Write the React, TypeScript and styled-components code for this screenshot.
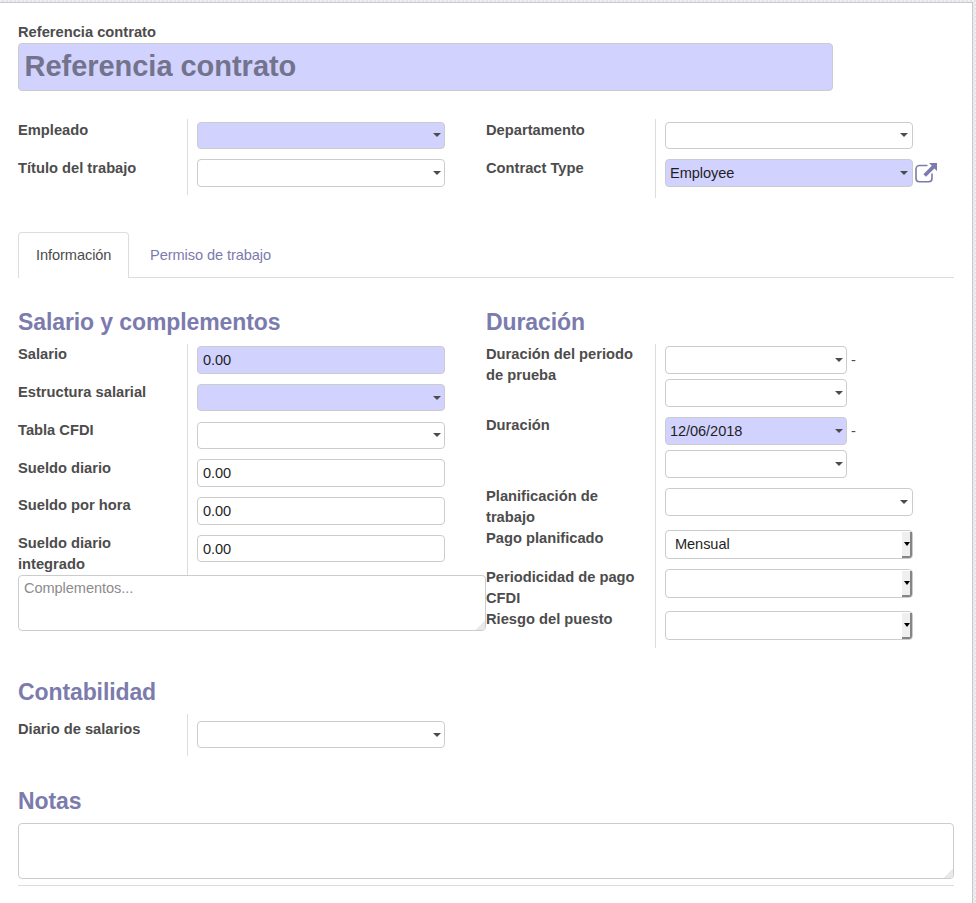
import React from "react";
import styled, { createGlobalStyle, css } from "styled-components";

const GlobalStyle = createGlobalStyle`
  * { box-sizing: border-box; }
  html, body { margin: 0; padding: 0; }
  body {
    height: 903px;
    overflow: hidden;
    font-family: "Liberation Sans", Arial, Helvetica, sans-serif;
    font-size: 14.6px;
    line-height: 21px;
    letter-spacing: -0.08px;
    color: #4c4c4c;
    background: #eeeeee repeating-conic-gradient(#e4e4e6 0 25%, #f0f0f0 0 50%) 0 0 / 4px 4px;
  }
`;

const Sheet = styled.main`
  width: 973px;
  height: 901px;
  margin-top: 2px;
  padding: 18px 18px 0;
  background: #fff;
  border: 1px solid #c8c8d3;
  border-left: 0;
  border-bottom: 0;
`;

const NameBlock = styled.header`
  height: 98px;
`;

const Label = styled.label<{ $top?: number }>`
  display: block;
  font-size: 14.7px;
  font-weight: bold;
  letter-spacing: 0;
  padding-top: ${(p) => p.$top ?? 1}px;
`;

const boxed = css`
  border: 1px solid #cccccc;
  border-radius: 4px;
`;

const NameInput = styled.div`
  ${boxed}
  width: 815px;
  height: 48px;
  padding: 0 5.5px;
  background: #d2d2ff;
  color: #73738c;
  font-size: 29px;
  font-weight: bold;
  letter-spacing: -0.03px;
  line-height: 44px;
`;

const Columns = styled.section`
  display: grid;
  grid-template-columns: 468px 468px;
  align-items: start;
`;

const Group = styled.div``;

const Row = styled.div<{ $height: number }>`
  display: grid;
  grid-template-columns: 170px 1fr;
  height: ${(p) => p.$height}px;
`;

const LabelCell = styled.div`
  border-right: 1px solid #dddddd;
  padding-right: 14px;
`;

/* Below a heading the labels sit one pixel higher against their fields. */
const Section = styled.div`
  ${Label} {
    margin-top: -1px;
  }
`;

const FieldCell = styled.div<{ $top: number }>`
  display: flex;
  flex-direction: column;
  gap: 5px;
  padding: ${(p) => p.$top}px 0 0 9px;
`;

const Line = styled.div`
  display: flex;
`;

const Input = styled.div<{ $height?: number; $required?: boolean; $narrow?: boolean; $pad?: number }>`
  ${boxed}
  display: flex;
  justify-content: space-between;
  width: ${(p) => (p.$narrow ? 182 : 248)}px;
  height: ${(p) => p.$height ?? 28}px;
  padding: 0 4px 0 ${(p) => p.$pad ?? 5}px;
  background: ${(p) => (p.$required ? "#d2d2ff" : "#fff")};
  color: #1f1f1f;
  line-height: 27px;
`;

const Caret = styled.i<{ $top: number; $right: number }>`
  margin: ${(p) => p.$top}px ${(p) => p.$right}px 0 auto;
  height: 4px;
  border: 4px solid transparent;
  border-top-color: #4c4c4c;
  border-bottom: 0;
`;

const NativeSelect = styled(Input)`
  height: 29px;
  padding: 0 0 0 9px;
`;

const SelectButton = styled.span`
  display: flex;
  align-items: center;
  justify-content: center;
  align-self: flex-end;
  width: 10px;
  height: 26px;
  padding: 0 0 0 2px;
  background: #efefef;
  border: solid #858585;
  border-width: 0 2px 2px 0;
  border-bottom-right-radius: 3px;
`;

const SelectArrow = styled.i`
  flex: none;
  border: 3px solid transparent;
  border-top: 4px solid #000;
  border-bottom: 0;
`;

const Dash = styled.span`
  margin-left: 4px;
  line-height: 29px;
  height: 28px;
`;

const ExternalLink = styled.svg`
  margin: 4px 0 0 2px;
`;

const Tabs = styled.nav`
  display: flex;
  height: 46px;
  margin-top: 34px;
  border-bottom: 1px solid #dddddd;
`;

const Tab = styled.a<{ $active?: boolean }>`
  padding: 12px 17px 0;
  height: 46px;
  border: 1px solid transparent;
  color: #7c7bad;
  ${(p) =>
    p.$active &&
    css`
      width: 111px;
      margin-right: 3px;
      color: #4c4c4c;
      background: #fff;
      border-color: #dddddd;
      border-bottom: 0;
      border-radius: 4px 4px 0 0;
    `}
`;

const Heading = styled.h2<{ $before: number; $after: number }>`
  margin: ${(p) => p.$before}px 0 ${(p) => p.$after}px;
  height: 26px;
  font-size: 23px;
  line-height: 26px;
  letter-spacing: -0.1px;
  color: #7c7bad;
  white-space: nowrap;
`;

const TextArea = styled.div`
  ${boxed}
  display: flex;
  justify-content: space-between;
  height: 56px;
  padding: 2px 0 0 5px;
  color: #8c8c8c;
`;

const Grip = styled.i`
  align-self: flex-end;
  width: 9px;
  height: 9px;
  border-bottom-right-radius: 3px;
  background: linear-gradient(135deg, transparent 50%, #e9e9e9 50%);
`;

const Rule = styled.hr`
  height: 1px;
  margin: 6px 0 0;
  border: 0;
  background: #dddddd;
`;

type FieldProps = {
  label: string;
  height: number;
  top?: number;
  labelTop?: number;
  children: React.ReactNode;
};

const Field = ({ label, height, top = 2, labelTop, children }: FieldProps) => (
  <Row $height={height}>
    <LabelCell>
      <Label $top={labelTop}>{label}</Label>
    </LabelCell>
    <FieldCell $top={top}>{children}</FieldCell>
  </Row>
);

type ComboProps = {
  value?: string;
  height?: number;
  required?: boolean;
  narrow?: boolean;
  caretTop?: number;
  caretRight?: number;
};

const Combo = ({ value, height, required, narrow, caretTop = 11, caretRight = -1 }: ComboProps) => (
  <Input $height={height} $required={required} $narrow={narrow} $pad={4}>
    {value}
    <Caret $top={caretTop} $right={caretRight} />
  </Input>
);

const Select = ({ value }: { value?: string }) => (
  <NativeSelect>
    <span>{value}</span>
    <SelectButton>
      <SelectArrow />
    </SelectButton>
  </NativeSelect>
);

const DateRange = ({ from, required }: { from?: string; required?: boolean }) => (
  <>
    <Line>
      <Combo narrow value={from} required={required} />
      <Dash>-</Dash>
    </Line>
    <Combo narrow />
  </>
);

export default function App() {
  return (
    <>
      <GlobalStyle />
      <Sheet>
        <NameBlock>
          <Label>Referencia contrato</Label>
          <NameInput>Referencia contrato</NameInput>
        </NameBlock>

        <Columns>
          <Group>
            <Field label="Empleado" height={38} top={3}>
              <Combo required height={27} caretTop={10} />
            </Field>
            <Field label="Título del trabajo" height={38}>
              <Combo />
            </Field>
          </Group>
          <Group>
            <Field label="Departamento" height={38} top={3}>
              <Combo height={27} caretTop={10} caretRight={0} />
            </Field>
            <Field label="Contract Type" height={41}>
              <Line>
                <Combo required value="Employee" caretRight={0} />
                <ExternalLink width="23" height="20" viewBox="0 0 23 20">
                  <path
                    d="M12.5 2.5H4.5A3.5 3.5 0 0 0 1 6v9.5A3.2 3.2 0 0 0 4.2 18.7h9.6A3.2 3.2 0 0 0 17 15.5V10.5"
                    fill="none"
                    stroke="#7c7bad"
                    strokeWidth="1.6"
                  />
                  <path d="M14 0h8v8l-2.6-2.6-8.4 8.4-2.6-2.6 8.4-8.4z" fill="#7c7bad" />
                </ExternalLink>
              </Line>
            </Field>
          </Group>
        </Columns>

        <Tabs>
          <Tab $active>Información</Tab>
          <Tab>Permiso de trabajo</Tab>
        </Tabs>

        <Section>
          <Columns>
            <Group>
              <Heading $before={31} $after={9}>Salario y complementos</Heading>
              <Field label="Salario" height={38}>
                <Input $required>0.00</Input>
              </Field>
              <Field label="Estructura salarial" height={38}>
                <Combo required height={27} />
              </Field>
              <Field label="Tabla CFDI" height={38}>
                <Combo height={27} caretTop={10} />
              </Field>
              <Field label="Sueldo diario" height={37} top={1}>
                <Input>0.00</Input>
              </Field>
              <Field label="Sueldo por hora" height={38}>
                <Input>0.00</Input>
              </Field>
              <Field label="Sueldo diario integrado" height={42}>
                <Input $height={27}>0.00</Input>
              </Field>
              <TextArea>
                Complementos...
                <Grip />
              </TextArea>
            </Group>
            <Group>
              <Heading $before={31} $after={9}>Duración</Heading>
              <Field label="Duración del periodo de prueba" height={71}>
                <DateRange />
              </Field>
              <Field label="Duración" height={71}>
                <DateRange required from="12/06/2018" />
              </Field>
              <Field label="Planificación de trabajo" height={42}>
                <Combo caretRight={0} />
              </Field>
              <Field label="Pago planificado" height={39}>
                <Select value="Mensual" />
              </Field>
              <Field label="Periodicidad de pago CFDI" height={42}>
                <Select />
              </Field>
              <Field label="Riesgo del puesto" height={39}>
                <Select />
              </Field>
            </Group>
          </Columns>

          <Heading $before={31} $after={9}>Contabilidad</Heading>
          <Field label="Diario de salarios" height={42} top={7} labelTop={6}>
            <Combo height={27} />
          </Field>
        </Section>

        <Heading $before={32} $after={9}>Notas</Heading>
        <TextArea>
          <span />
          <Grip />
        </TextArea>
        <Rule />
      </Sheet>
    </>
  );
}
